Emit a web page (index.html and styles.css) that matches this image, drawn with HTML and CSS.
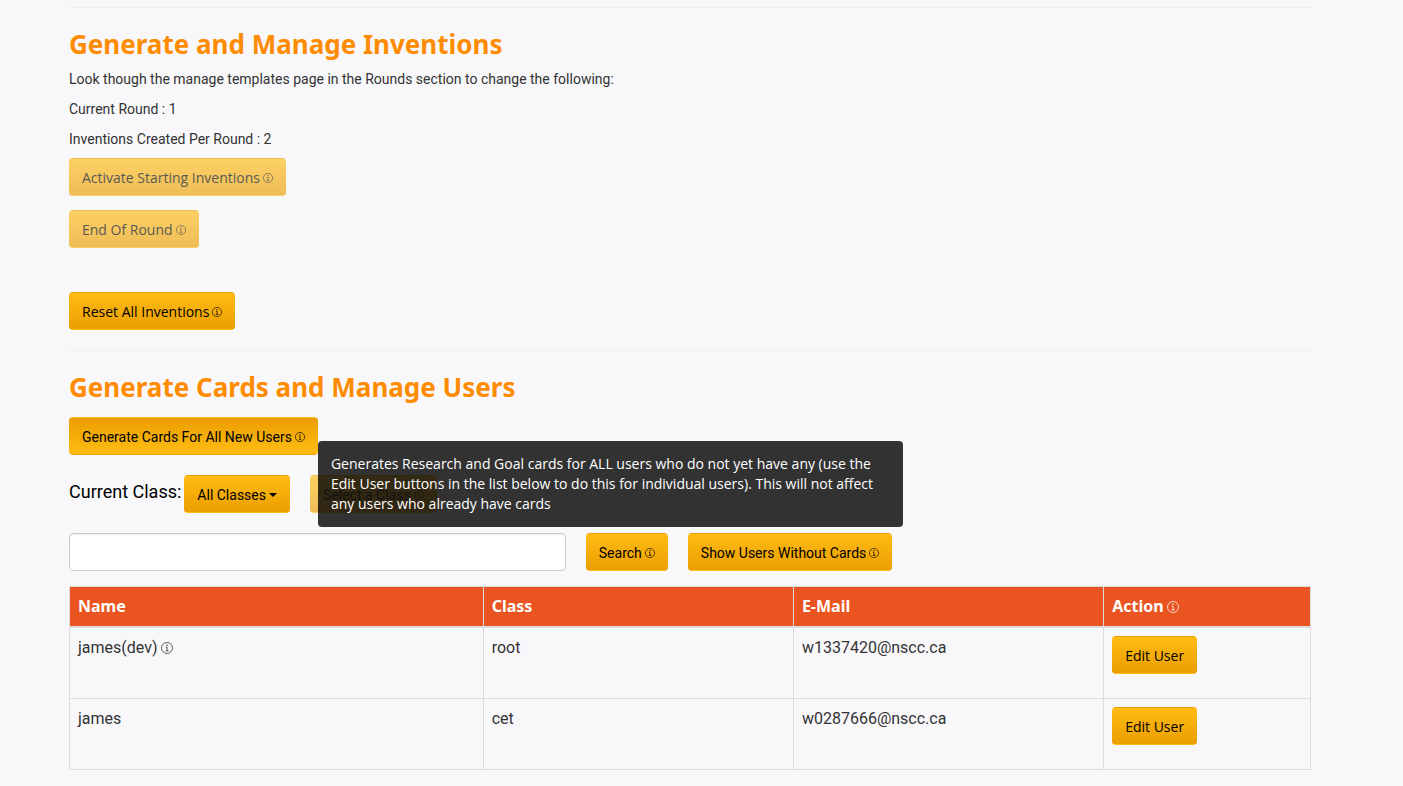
FILE: index.html
```html
<!DOCTYPE html>
<html lang="en">
<head>
<meta charset="utf-8">
<meta name="viewport" content="width=device-width, initial-scale=1">
<title>Manage Inventions and Users</title>
<link rel="stylesheet" href="styles.css">
</head>
<body>
<svg class="sprite" aria-hidden="true">
  <symbol id="info" viewBox="0 0 12 12">
    <circle cx="6" cy="6" r="5.5" fill="none" stroke="currentColor" stroke-width=".75"/>
    <rect x="5.4" y="2.6" width="1.2" height="1.3" fill="currentColor"/>
    <path d="M4.7 5.2h1.4v3.6M4.5 8.9h3.1" fill="none" stroke="currentColor" stroke-width=".8"/>
  </symbol>
</svg>
<main class="page">
  <section class="section">
    <h2 class="heading">Generate and Manage Inventions</h2>
    <p class="text">Look though the manage templates page in the Rounds section to change the following:</p>
    <p class="text">Current Round : 1</p>
    <p class="text">Inventions Created Per Round : 2</p>
    <div class="stack">
      <button class="btn" type="button" disabled>Activate Starting Inventions<svg class="info" aria-hidden="true"><use href="#info"/></svg></button>
      <button class="btn" type="button" disabled>End Of Round<svg class="info" aria-hidden="true"><use href="#info"/></svg></button>
      <button class="btn btn-reset" type="button">Reset All Inventions<svg class="info" aria-hidden="true"><use href="#info"/></svg></button>
    </div>
  </section>
  <section class="section">
    <h2 class="heading">Generate Cards and Manage Users</h2>
    <div class="controls">
      <div class="tip-anchor">
        <button class="btn btn-active" type="button" aria-describedby="generate-tip">Generate Cards For All New Users<svg class="info" aria-hidden="true"><use href="#info"/></svg></button>
        <div class="tooltip" id="generate-tip" role="tooltip">Generates Research and Goal cards for ALL users who do not yet have any (use the Edit User buttons in the list below to do this for individual users). This will not affect any users who already have cards</div>
      </div>
      <div class="row">
        <div class="class-picker">
          <span class="label" id="class-label">Current Class:</span>
          <button class="btn" id="class-menu" type="button" aria-haspopup="true" aria-labelledby="class-label class-menu">All Classes<span class="caret"></span></button>
        </div>
        <button class="btn" type="button" disabled>Select a Class<svg class="info" aria-hidden="true"><use href="#info"/></svg></button>
      </div>
      <form class="row">
        <input class="search" type="text" aria-label="Search users">
        <button class="btn" type="button">Search<svg class="info" aria-hidden="true"><use href="#info"/></svg></button>
        <button class="btn" type="button">Show Users Without Cards<svg class="info" aria-hidden="true"><use href="#info"/></svg></button>
      </form>
    </div>
    <table class="users">
      <colgroup><col class="col-name"><col class="col-mid"><col class="col-mid"><col></colgroup>
      <thead>
        <tr><th scope="col">Name</th><th scope="col">Class</th><th scope="col">E-Mail</th><th scope="col">Action<svg class="info info-lg" aria-hidden="true"><use href="#info"/></svg></th></tr>
      </thead>
      <tbody>
        <tr><td>james(dev)<svg class="info info-lg" aria-hidden="true"><use href="#info"/></svg></td><td>root</td><td>w1337420@nscc.ca</td><td><button class="btn btn-edit" type="button">Edit User</button></td></tr>
        <tr><td>james</td><td>cet</td><td>w0287666@nscc.ca</td><td><button class="btn btn-edit" type="button">Edit User</button></td></tr>
      </tbody>
    </table>
  </section>
</main>
</body>
</html>
```
FILE: styles.css
```css
* { box-sizing: border-box; }

body {
  margin: 0;
  background: #f8f8fb;
  color: #333;
  font: 14px/20px Roboto, "Noto Sans", sans-serif;
}

.sprite { display: none; }

.page { padding: 7px 92px 16px 69px; }

.section {
  border-top: 1px solid #eee;
  padding: 20px 0;
}

.section:last-child { padding-bottom: 0; }

.heading {
  margin: 0 0 9px;
  color: #ff8c00;
  font: bold 26px/32px "Noto Sans", "Open Sans", sans-serif;
}

.text { margin: 0 0 10px; }

.text + .stack { margin-top: -1px; }

.stack {
  display: flex;
  flex-direction: column;
  align-items: flex-start;
  gap: 14px;
}

.btn {
  display: inline-flex;
  align-items: center;
  height: 38px;
  padding: 2px 12px 0;
  border: 1px solid transparent;
  border-radius: 4px;
  background: linear-gradient(#ffbc13, #eb9e00);
  color: #000;
  font: inherit;
  white-space: nowrap;
}

.btn:disabled { opacity: .65; }

.btn-active { background: linear-gradient(#eb9e00, #ffbc13); }

.stack .btn,
.users .btn { font-family: "Open Sans", "Noto Sans", sans-serif; }

.btn-reset { margin-top: 30px; }

.btn-edit { margin-bottom: 16px; }

.info {
  width: 10px;
  height: 10px;
  margin-left: 3px;
}

.info-lg {
  width: 12px;
  height: 12px;
  margin-left: 3px;
  vertical-align: -1px;
}

.caret {
  margin-left: 3px;
  border: 4px solid transparent;
  border-top-color: currentColor;
  border-bottom: 0;
}

.controls {
  display: flex;
  flex-direction: column;
  align-items: stretch;
  gap: 20px;
  margin: 14px 0 15px;
}

.tip-anchor {
  position: relative;
  align-self: flex-start;
  display: flex;
}

.tooltip {
  position: absolute;
  z-index: 1;
  top: 24px;
  left: 100%;
  width: 585px;
  padding: 13px;
  border-radius: 4px;
  background: rgba(0, 0, 0, .8);
  color: #fff;
  font-family: "Open Sans", "Noto Sans", sans-serif;
}

.row {
  display: flex;
  gap: 20px;
}

.class-picker {
  display: flex;
  gap: 3px;
}

.label {
  color: #000;
  font-size: 18px;
  line-height: 34px;
}

.search {
  width: 40%;
  height: 38px;
  padding: 8px 12px;
  border: 1px solid #ccc;
  border-radius: 4px;
  background: #fff;
  box-shadow: inset 0 1px 1px rgba(0, 0, 0, .075);
  font: inherit;
}

.users {
  width: 100%;
  border-collapse: collapse;
  table-layout: fixed;
  font-size: 16px;
  line-height: 23px;
}

.col-name { width: 33.333%; }

.col-mid { width: 25%; }

.users th,
.users td {
  padding: 8px;
  border: 1px solid #ddd;
  text-align: left;
  vertical-align: top;
}

.users th {
  border-bottom-width: 2px;
  background: #e95420;
  color: #fff;
  font-family: "Noto Sans", "Open Sans", sans-serif;
}

.users .btn {
  display: flex;
  font-size: 14px;
  line-height: 20px;
}
```
